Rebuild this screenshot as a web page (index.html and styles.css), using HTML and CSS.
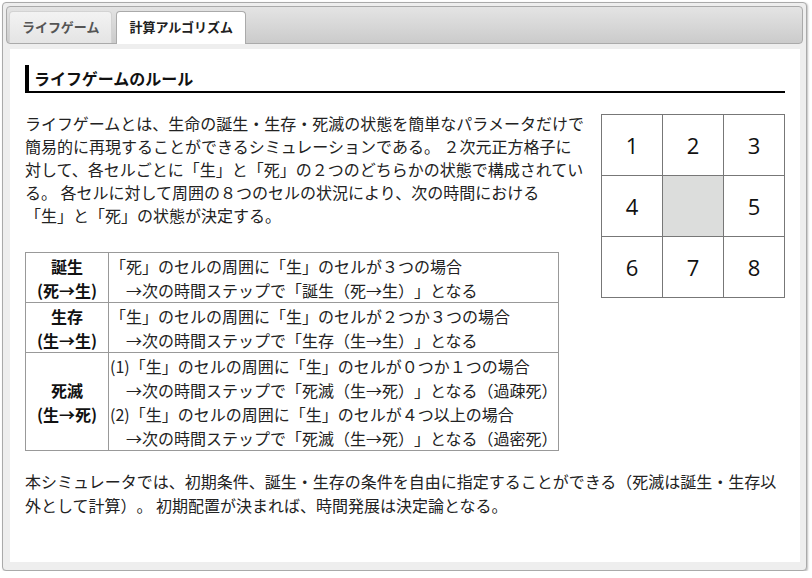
FILE: index.html
```html
<!DOCTYPE html>
<html lang="ja">
<head>
<meta charset="utf-8">
<title>ライフゲーム</title>
<link rel="stylesheet" href="styles.css">
</head>
<body>
<div class="tabs">
  <ul class="tab-nav">
    <li class="tab">ライフゲーム</li>
    <li class="tab active">計算アルゴリズム</li>
  </ul>
  <div class="panel">
    <h2 class="heading">ライフゲームのルール</h2>
    <div class="grid">
      <div class="cell">1</div>
      <div class="cell">2</div>
      <div class="cell">3</div>
      <div class="cell">4</div>
      <div class="cell center"></div>
      <div class="cell">5</div>
      <div class="cell">6</div>
      <div class="cell">7</div>
      <div class="cell">8</div>
    </div>
    <p class="lead">ライフゲームとは、生命の誕生・生存・死滅の状態を簡単なパラメータだけで簡易的に再現することができるシミュレーションである。 ２次元正方格子に対して、各セルごとに「生」と「死」の２つのどちらかの状態で構成されている。 各セルに対して周囲の８つのセルの状況により、次の時間における<br>「生」と「死」の状態が決定する。</p>
    <table class="rules">
      <tr>
        <th>誕生<br>(死→生)</th>
        <td>「死」のセルの周囲に「生」のセルが３つの場合<br>　→次の時間ステップで「誕生（死→生）」となる</td>
      </tr>
      <tr>
        <th>生存<br>(生→生)</th>
        <td>「生」のセルの周囲に「生」のセルが２つか３つの場合<br>　→次の時間ステップで「生存（生→生）」となる</td>
      </tr>
      <tr>
        <th>死滅<br>(生→死)</th>
        <td>(1)「生」のセルの周囲に「生」のセルが０つか１つの場合<br>　→次の時間ステップで「死滅（生→死）」となる（過疎死）<br>(2)「生」のセルの周囲に「生」のセルが４つ以上の場合<br>　→次の時間ステップで「死滅（生→死）」となる（過密死）</td>
      </tr>
    </table>
    <p class="note">本シミュレータでは、初期条件、誕生・生存の条件を自由に指定することができる（死滅は誕生・生存以外として計算）。 初期配置が決まれば、時間発展は決定論となる。</p>
  </div>
</div>
</body>
</html>
```

FILE: styles.css
```css
* { box-sizing: border-box; }

html, body {
  margin: 0;
  padding: 0;
  background: #fff;
}

body {
  font-family: "Noto Sans CJK JP", "Noto Sans", sans-serif;
  color: #222;
}

.tabs {
  margin: 2px 0 0 2px;
  width: 805px;
  height: 569px;
  border: 1px solid #aaa;
  border-radius: 4px;
  background: #eee;
  padding: 3px;
  display: flex;
  flex-direction: column;
  box-shadow: 1px 1px 2px rgba(0, 0, 0, 0.25);
}

.tab-nav {
  list-style: none;
  margin: 0;
  padding: 4px 2px 0 2px;
  display: flex;
  gap: 4px;
  border: 1px solid #aaa;
  border-radius: 4px;
  background: linear-gradient(#e4e4e4, #cbcbcb);
}

.tab {
  height: 32px;
  line-height: 30px;
  padding: 0 12px;
  margin-bottom: -1px;
  border: 1px solid #d3d3d3;
  border-bottom: 0;
  border-radius: 4px 4px 0 0;
  background: linear-gradient(#f3f3f3, #e4e4e4);
  font-size: 13px;
  font-weight: bold;
  color: #555;
  white-space: nowrap;
}

.tab.active {
  background: #fff;
  border-color: #aaa;
  color: #212121;
  height: 33px;
}

.panel {
  flex: 1;
  margin: 5px 3px 5px 4px;
  background: #fff;
  padding: 0 15px;
}

.heading {
  margin: 16px 0 0 0;
  padding: 0 0 0 5px;
  height: 28px;
  line-height: 26px;
  font-size: 16px;
  font-weight: bold;
  color: #111;
  border-left: 4px solid #000;
  border-bottom: 2px solid #000;
}

.grid {
  float: right;
  margin: 21px 0 0 14px;
  display: grid;
  grid-template-columns: repeat(3, 60px);
  grid-template-rows: repeat(3, 60px);
  gap: 1px;
  border: 1px solid #777;
  background: #777;
}

.cell {
  background: #fff;
  display: flex;
  align-items: center;
  justify-content: center;
  font-family: "Open Sans", "Liberation Sans", sans-serif;
  font-size: 22px;
  color: #111;
}

.cell.center {
  background: #dcdddc;
}

.lead {
  margin: 19px 0 0 0;
  font-size: 16px;
  line-height: 23px;
}

.rules {
  margin-top: 25px;
  border-collapse: collapse;
  width: 534px;
  font-size: 16px;
  line-height: 24px;
  text-spacing-trim: space-all;
}

.rules th,
.rules td {
  border: 1px solid #999;
  padding: 1px 0 0 1px;
  vertical-align: middle;
}

.rules th {
  width: 83px;
  text-align: center;
  font-weight: bold;
  color: #111;
  padding: 1px 0 0 0;
}

.rules td {
  white-space: nowrap;
  text-align: left;
}

.note {
  margin: 18px 0 0 0;
  font-size: 16px;
  line-height: 24px;
  text-spacing-trim: space-all;
}
```
